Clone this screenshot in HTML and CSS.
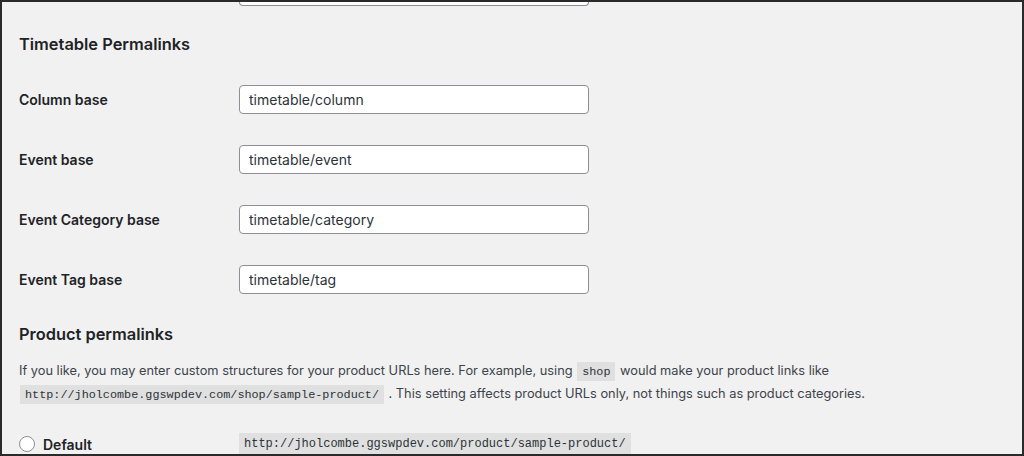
FILE: index.html
```html
<!DOCTYPE html>
<html lang="en">
<head>
  <meta charset="UTF-8">
  <meta name="viewport" content="width=device-width, initial-scale=1.0">
  <title>Permalink Settings</title>
  <link rel="stylesheet" href="styles.css">
</head>
<body>
  <div class="screen">
    <div class="prev-field"></div>

    <h2 class="section-title first">Timetable Permalinks</h2>

    <div class="form-rows">
      <div class="form-row">
        <label for="column">Column base</label>
        <input type="text" id="column" value="timetable/column" />
      </div>
      <div class="form-row">
        <label for="event">Event base</label>
        <input type="text" id="event" value="timetable/event" />
      </div>
      <div class="form-row">
        <label for="category">Event Category base</label>
        <input type="text" id="category" value="timetable/category" />
      </div>
      <div class="form-row">
        <label for="tag">Event Tag base</label>
        <input type="text" id="tag" value="timetable/tag" />
      </div>
    </div>

    <h2 class="section-title">Product permalinks</h2>

    <p class="intro">
      If you like, you may enter custom structures for your product URLs here. For example, using <code>shop</code> would make your product links like<br>
      <code>http://jholcombe.ggswpdev.com/shop/sample-product/</code> . This setting affects product URLs only, not things such as product categories.
    </p>

    <div class="radio-row">
      <label class="radio-label"><span class="radio"></span>Default</label>
      <code>http://jholcombe.ggswpdev.com/product/sample-product/</code>
    </div>
  </div>
</body>
</html>
```

FILE: styles.css
```css
* {
  box-sizing: border-box;
  margin: 0;
  padding: 0;
}

body {
  background: #f1f1f1;
  font-family: 'Inter', 'Noto Sans', sans-serif;
  color: #1d2327;
}

.screen {
  height: 456px;
  overflow: hidden;
  border: 2px solid #2a2a2a;
  padding: 0 17px;
  background: #f1f1f1;
}

.prev-field {
  margin-left: 220px;
  width: 350px;
  height: 4px;
  background: #fff;
  border: 1px solid #8c8f94;
  border-top: none;
  border-radius: 0 0 4px 4px;
}

.section-title {
  font-size: 16.4px;
  font-weight: 600;
  line-height: 24px;
  margin-top: 28px;
}

.section-title.first {
  margin-top: 26px;
}

.form-rows {
  display: flex;
  flex-direction: column;
  gap: 31px;
  margin-top: 29px;
}

.form-row {
  display: flex;
  align-items: center;
}

.form-row label {
  width: 220px;
  font-size: 14px;
  font-weight: 600;
}

.form-row input {
  width: 350px;
  height: 29px;
  padding: 0 9px;
  border: 1px solid #8c8f94;
  border-radius: 4px;
  background: #fff;
  font-family: inherit;
  font-size: 14px;
  color: #2c3338;
}

.intro {
  margin-top: 14px;
  font-size: 12.8px;
  line-height: 21px;
  color: #3c434a;
}

code {
  font-family: 'Liberation Mono', 'DejaVu Sans Mono', monospace;
  font-size: 11.8px;
  background: rgba(0, 0, 0, 0.07);
  padding: 3px 5px 2px;
  margin: 0 1px;
  color: #2c3338;
}

.radio-row {
  display: flex;
  align-items: center;
  margin-top: 27px;
}

.radio-label {
  width: 220px;
  display: flex;
  align-items: center;
  gap: 8px;
  font-size: 14px;
  font-weight: 600;
}

.radio {
  width: 16px;
  height: 16px;
  border: 1px solid #8c8f94;
  border-radius: 50%;
  background: #fff;
}

.radio-row code {
  margin: 0;
  padding: 4px 5px;
  font-size: 12px;
}
```
